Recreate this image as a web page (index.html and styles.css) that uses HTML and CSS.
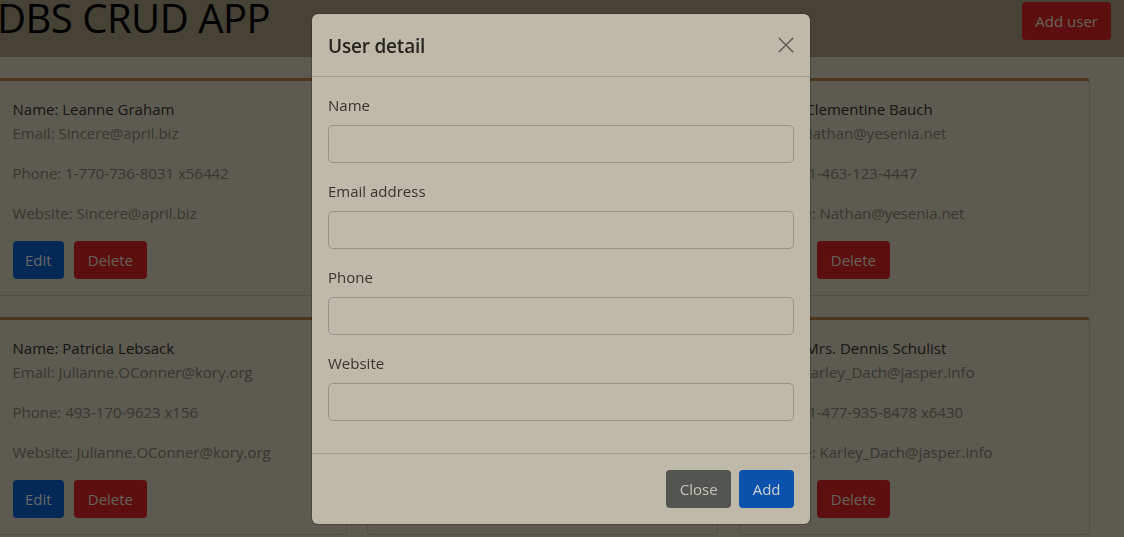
FILE: index.html
```html
<!DOCTYPE html>
<html lang="en">
<head>
<meta charset="utf-8">
<title>DBS CRUD APP</title>
<link rel="stylesheet" href="styles.css">
</head>
<body>
<header class="navbar">
  <h1 class="brand">DBS CRUD APP</h1>
  <button class="btn btn-danger add-user" type="button">Add user</button>
</header>

<main class="content">
  <div class="cards">
    <div class="card">
      <p class="name">Name: Leanne Graham</p>
      <p class="muted email">Email: Sincere@april.biz</p>
      <p class="muted">Phone: 1-770-736-8031 x56442</p>
      <p class="muted">Website: Sincere@april.biz</p>
      <div class="actions"><button class="btn btn-primary" type="button">Edit</button><button class="btn btn-danger" type="button">Delete</button></div>
    </div>
    <div class="card">
      <p class="name">Name: Ervin Howell</p>
      <p class="muted email">Email: Shanna@melissa.tv</p>
      <p class="muted">Phone: 010-692-6593 x09125</p>
      <p class="muted">Website: Shanna@melissa.tv</p>
      <div class="actions"><button class="btn btn-primary" type="button">Edit</button><button class="btn btn-danger" type="button">Delete</button></div>
    </div>
    <div class="card">
      <p class="name">Name: Clementine Bauch</p>
      <p class="muted email">Email: Nathan@yesenia.net</p>
      <p class="muted">Phone: 1-463-123-4447</p>
      <p class="muted">Website: Nathan@yesenia.net</p>
      <div class="actions"><button class="btn btn-primary" type="button">Edit</button><button class="btn btn-danger" type="button">Delete</button></div>
    </div>
    <div class="card">
      <p class="name">Name: Patricia Lebsack</p>
      <p class="muted email">Email: Julianne.OConner@kory.org</p>
      <p class="muted">Phone: 493-170-9623 x156</p>
      <p class="muted">Website: Julianne.OConner@kory.org</p>
      <div class="actions"><button class="btn btn-primary" type="button">Edit</button><button class="btn btn-danger" type="button">Delete</button></div>
    </div>
    <div class="card">
      <p class="name">Name: Chelsey Dietrich</p>
      <p class="muted email">Email: Lucio_Hettinger@annie.ca</p>
      <p class="muted">Phone: (254)954-1289</p>
      <p class="muted">Website: Lucio_Hettinger@annie.ca</p>
      <div class="actions"><button class="btn btn-primary" type="button">Edit</button><button class="btn btn-danger" type="button">Delete</button></div>
    </div>
    <div class="card">
      <p class="name">Name: Mrs. Dennis Schulist</p>
      <p class="muted email">Email: Karley_Dach@jasper.info</p>
      <p class="muted">Phone: 1-477-935-8478 x6430</p>
      <p class="muted">Website: Karley_Dach@jasper.info</p>
      <div class="actions"><button class="btn btn-primary" type="button">Edit</button><button class="btn btn-danger" type="button">Delete</button></div>
    </div>
  </div>
</main>

<div class="backdrop"></div>

<div class="modal" role="dialog">
  <div class="modal-header">
    <h5 class="modal-title">User detail</h5>
    <button class="btn-close" type="button" aria-label="Close">
      <svg width="16" height="16" viewBox="0 0 16 16"><path d="M1.2 1.2L14.8 14.8M14.8 1.2L1.2 14.8" stroke="#000" stroke-opacity="0.5" stroke-width="1.5" stroke-linecap="round" fill="none"/></svg>
    </button>
  </div>
  <form class="modal-body">
    <label class="label" for="f-name">Name</label>
    <input class="input" id="f-name" type="text">
    <label class="label" for="f-email">Email address</label>
    <input class="input" id="f-email" type="email">
    <label class="label" for="f-phone">Phone</label>
    <input class="input" id="f-phone" type="text">
    <label class="label" for="f-web">Website</label>
    <input class="input" id="f-web" type="text">
  </form>
  <div class="modal-footer">
    <button class="btn btn-secondary" type="button">Close</button>
    <button class="btn btn-primary" type="button">Add</button>
  </div>
</div>
</body>
</html>
```

FILE: styles.css
```css
* {
  box-sizing: border-box;
}

html,
body {
  margin: 0;
  height: 100%;
  overflow: hidden;
}

body {
  font-family: "Open Sans", "Noto Sans", sans-serif;
  font-size: 15px;
  line-height: 24px;
  background: #bab4a2;
  color: #33322c;
}

/* ---------- navbar ---------- */
.navbar {
  display: flex;
  justify-content: space-between;
  align-items: flex-start;
  height: 57px;
  background: #8e846c;
}

.brand {
  margin: 0 0 0 -3px;
  font-size: 40px;
  line-height: 35px;
  font-weight: 500;
  letter-spacing: -0.5px;
  color: #000;
}

.add-user {
  margin: 2px 13px 0 0;
}

/* ---------- buttons ---------- */
.btn {
  font-family: inherit;
  font-size: 15px;
  line-height: 24px;
  padding: 6px 12px;
  border: 1px solid transparent;
  border-radius: 4px;
  color: #c8c3b4;
  cursor: pointer;
}

.btn-primary {
  background: #0b52ad;
  color: #cdd0d0;
}

.btn-danger {
  background: #b81f1c;
}

.btn-secondary {
  background: #535553;
}

/* ---------- cards ---------- */
.content {
  padding-top: 21px;
}

.cards {
  display: grid;
  grid-template-columns: repeat(3, 351px);
  column-gap: 20.5px;
  row-gap: 21px;
  margin-left: -4.5px;
}

.card {
  border: 1px solid #a19d8f;
  border-top: 3px solid #986c3c;
  border-radius: 4px;
  padding: 16px;
}

.card p {
  margin: 0 0 16px;
}

.card .name {
  margin: 0;
  color: #2e2d28;
}

.card .muted {
  color: #726e64;
}

.actions {
  display: flex;
  gap: 10px;
}

.actions .btn-primary {
  padding: 6px 11.5px;
}

.actions .btn-danger {
  padding: 6px 12.6px;
}

/* ---------- modal ---------- */
.backdrop {
  position: fixed;
  inset: 0;
  background: rgba(0, 0, 0, 0.5);
}

.modal {
  position: fixed;
  top: 14px;
  left: 312px;
  width: 498px;
  background: #beb9a9;
  border-radius: 6px;
  box-shadow: 0 0 0 1px rgba(0, 0, 0, 0.2);
}

.modal-header {
  display: flex;
  justify-content: space-between;
  align-items: center;
  padding: 16px;
  border-bottom: 1px solid #a29e93;
}

.modal-title {
  margin: 0;
  padding-top: 2px;
  font-size: 19px;
  line-height: 28px;
  font-weight: 600;
  letter-spacing: -0.2px;
  color: #25241f;
}

.btn-close {
  display: flex;
  padding: 0;
  border: 0;
  background: none;
  cursor: pointer;
}

.modal-body {
  margin: 0;
  padding: 16px;
}

.label {
  display: block;
  margin-bottom: 8px;
  color: #37352f;
}

.input {
  display: block;
  width: 100%;
  height: 38px;
  margin: 0 0 16px;
  border: 1px solid #96938a;
  border-radius: 5px;
  background: transparent;
}

.modal-footer {
  display: flex;
  justify-content: flex-end;
  gap: 8px;
  padding: 16px;
  border-top: 1px solid #a29e93;
}

.modal-footer .btn {
  padding: 6px 12.5px;
}
```
